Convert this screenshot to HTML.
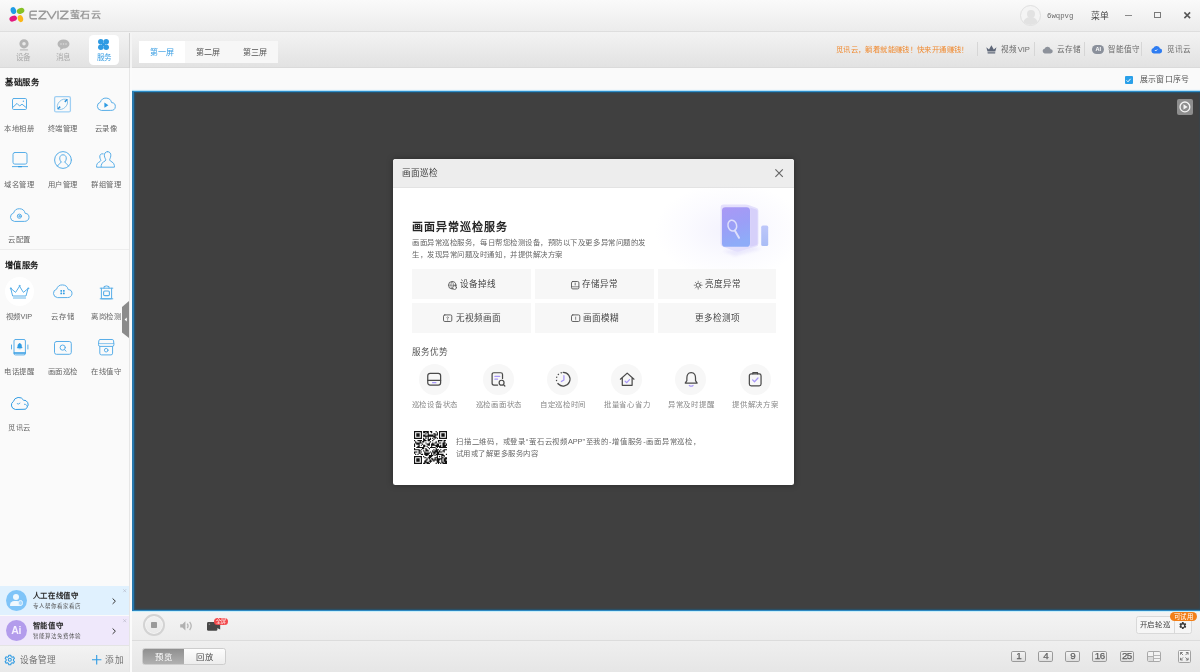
<!DOCTYPE html>
<html lang="zh-CN">
<head>
<meta charset="utf-8">
<title>EZVIZ</title>
<style>
*{box-sizing:border-box;margin:0;padding:0}
html,body{width:1200px;height:672px;overflow:hidden;background:#f5f5f5}
body{font-family:"Liberation Sans",sans-serif;font-size:7.5px;color:#666;position:relative;-webkit-text-size-adjust:none}
.abs{position:absolute}
.t{position:absolute;white-space:nowrap;height:12px;line-height:12px}
.c{text-align:center}
.j{text-align:justify;text-align-last:justify;text-justify:inter-character}
svg{position:absolute;overflow:visible}
/* ---------- title bar ---------- */
#titlebar{left:0;top:0;width:1200px;height:32px;background:linear-gradient(#fafafa,#ececec);border-bottom:1px solid #dedede}
/* ---------- nav row ---------- */
#navrow{left:0;top:32px;width:1200px;height:36px;background:linear-gradient(#f3f3f3,#e2e2e2);border-bottom:1px solid #dadada}
#svc{left:88.5px;top:34.5px;width:30.5px;height:30px;background:#fff;border-radius:4.5px}
#tabs{left:138.7px;top:41.3px;width:139.5px;height:21.3px;background:#f7f7f7}
#tab1{left:0;top:0;width:46.6px;height:21.3px;background:#fff}
.tab{font-size:8.1px;color:#555}
.sep{position:absolute;top:42px;width:1px;height:14px;background:#d6d6d6}
.tb{font-size:7.6px;color:#6a6a6a;top:43.5px}
/* ---------- sidebar ---------- */
#sidebar{left:0;top:68px;width:129px;height:604px;background:#fafafa}
#sidesep{left:128.600px;top:68px;width:3.200px;height:604px;background:#fbfbfb;border-left:1.200px solid #e6e6e6}
#sidesep2{left:129px;top:33px;width:2.800px;height:35px;background:#f4f4f4;border-left:1px solid #d2d2d2}
.lab{font-size:7.5px;color:#666;width:44px;text-align:center}
.sec{font-family:"Liberation Serif",serif;font-weight:bold;font-size:8.300px;color:#1e1e1e;left:5px}
/* ---------- main ---------- */
#subbar{left:132px;top:68px;width:1068px;height:22px;background:#fafafa}
#video{left:131.700px;top:90.900px;width:1068.300px;height:519.900px;background:#404040;border-top:1.700px solid #2d8dc9;border-bottom:1.800px solid #2e88c2;border-left:2.700px solid #2979ae;box-shadow:inset 1px 1px 1.500px #26546f,inset 0 -1px 1.500px #26546f,0 -1.100px 0 #b4e1f7,0 1.500px 0 #c6eefa}
#ctrlbar{left:132px;top:611px;width:1068px;height:30px;background:linear-gradient(#f4f4f4,#ececec);border-bottom:1px solid #dcdcdc}
#botbar{left:132px;top:641px;width:1068px;height:31px;background:linear-gradient(#efefef,#e6e6e6)}
/* ---------- modal ---------- */
#modal{left:393px;top:159px;width:401px;height:326px;background:#fff;border-radius:2.5px;overflow:hidden;box-shadow:0 0 6px rgba(0,0,0,.35)}
#mhead{left:0;top:0;width:401px;height:29px;background:#ededed;border-bottom:1px solid #e3e3e3}
</style>
</head>
<body>
<div id="app" style="position:absolute;left:0;top:0;width:1200px;height:672px;will-change:transform;opacity:.999">
<!-- ================= TITLE BAR ================= -->
<div id="titlebar" class="abs">
  <!-- logo petals -->
  <svg style="left:8px;top:6px" width="18" height="18" viewBox="0 0 18 18">
    <ellipse cx="5.4" cy="4.6" rx="2.7" ry="3.5" fill="#1e9be6" transform="rotate(-18 5.4 4.6)"/>
    <ellipse cx="12.6" cy="4.9" rx="3.9" ry="2.8" fill="#86c125" transform="rotate(-22 12.6 4.9)"/>
    <ellipse cx="5.2" cy="12.6" rx="3.9" ry="2.7" fill="#e3187e" transform="rotate(-22 5.2 12.6)"/>
    <ellipse cx="12.4" cy="12.6" rx="2.7" ry="3.6" fill="#fbb617" transform="rotate(-16 12.4 12.6)"/>
  </svg>
  <!-- EZVIZ wordmark -->
  <svg style="left:29px;top:10px" width="42" height="10" viewBox="0 0 42 10" fill="none" stroke="#9a9a9a" stroke-width="1.45" stroke-linejoin="round">
    <path d="M8 1.3H2.6Q1 1.3 1 2.9V7.1Q1 8.7 2.6 8.7H8M1.4 5H7.4"/>
    <path d="M9.6 1.3H17L9.8 8.7H17.4"/>
    <path d="M18 1.1L22.6 8.7L27.2 1.1"/>
    <path d="M29 .8V9.2"/>
    <path d="M31 1.3H39L31.4 8.7H39.6"/>
  </svg>
  <div class="t" style="left:70.200px;top:9.300px;font-size:8.600px;font-weight:bold;color:#9a9a9a;transform:scaleX(1.160);transform-origin:0 50%">萤石云</div>
  <!-- avatar -->
  <div class="abs" style="left:1019.5px;top:5.3px;width:21px;height:21px;border-radius:50%;background:#f4f4f4;border:1px solid #e0e0e0;overflow:hidden">
    <div class="abs" style="left:6px;top:3.5px;width:8px;height:8.5px;border-radius:50%;background:#e2e2e2"></div>
    <div class="abs" style="left:2.5px;top:11px;width:15px;height:12px;border-radius:7px 7px 0 0;background:#e2e2e2"></div>
  </div>
  <div class="t" style="left:1047px;top:9.600px;font-family:'Liberation Mono',monospace;font-size:7.300px;color:#6a6a6a">6wqpvg</div>
  <div class="t" style="left:1091px;top:9.5px;font-size:8.8px;color:#444">菜单</div>
  <div class="abs" style="left:1125px;top:14.5px;width:6.5px;height:1.3px;background:#8a8a8a"></div>
  <div class="abs" style="left:1154px;top:12px;width:6.8px;height:6px;border:1px solid #7a7a7a;border-top-width:1.8px"></div>
  <svg style="left:1184px;top:12px" width="6.5" height="6.5" viewBox="0 0 6.5 6.5" stroke="#555" stroke-width="1.5"><path d="M.4 .4L6.1 6.1M6.1 .4L.4 6.1"/></svg>
</div>

<!-- ================= NAV ROW ================= -->
<div id="navrow" class="abs"></div>
<div id="svc" class="abs"></div>
<!-- 设备 icon -->
<svg style="left:17.5px;top:38.5px" width="12" height="12" viewBox="0 0 12 12">
  <circle cx="6" cy="4.800" r="3.200" fill="#e9e9e9" stroke="#b4b4b4" stroke-width="2.800"/>
  <rect x="1.800" y="10.300" width="8.400" height="1.200" rx=".6" fill="#bcbcbc"/>
</svg>
<div class="t c" style="left:8px;top:52.100px;width:30px;color:#a9a9a9">设备</div>
<!-- 消息 icon -->
<svg style="left:57px;top:38.5px" width="13" height="12" viewBox="0 0 13 12">
  <ellipse cx="6.5" cy="5" rx="6" ry="4.6" fill="#b7b7b7"/>
  <path d="M3.4 8.4L3 11.2L6.4 9.2Z" fill="#b7b7b7"/>
  <circle cx="4" cy="5" r=".8" fill="#ddd"/><circle cx="6.5" cy="5" r=".8" fill="#ddd"/><circle cx="9" cy="5" r=".8" fill="#ddd"/>
</svg>
<div class="t c" style="left:48.3px;top:52.100px;width:30px;color:#a9a9a9">消息</div>
<!-- 服务 icon -->
<svg style="left:98px;top:39px" width="11" height="11" viewBox="0 0 11 11" fill="#2f9be3">
  <circle cx="2.8" cy="2.8" r="2.75"/><circle cx="8.2" cy="2.8" r="2.75"/><circle cx="2.8" cy="8.2" r="2.75"/><circle cx="8.2" cy="8.2" r="2.75"/>
  <rect x="4" y="4" width="3" height="3"/>
</svg>
<div class="t c" style="left:88.5px;top:52.100px;width:30.5px;color:#3a9ee3">服务</div>

<!-- tabs -->
<div id="tabs" class="abs">
  <div id="tab1" class="abs"></div>
  <div class="t c tab" style="left:0;top:5.300px;width:46.600px;color:#3a9ee3">第一屏</div>
  <div class="t c tab" style="left:46.5px;top:5.300px;width:46.600px">第二屏</div>
  <div class="t c tab" style="left:93px;top:5.300px;width:46.600px">第三屏</div>
</div>

<!-- toolbar right -->
<div class="t j" style="left:835.8px;top:43.8px;width:132.6px;font-size:7.3px;color:#f08a30">觅讯云，躺着就能赚钱！快来开通赚钱！</div>
<div class="sep" style="left:977px"></div>
<svg style="left:986.3px;top:45.4px" width="10.8" height="8.6" viewBox="0 0 10.8 8.6" fill="#5d6677">
  <path d="M.3 2.3L3 4.6L5.4 .3L7.8 4.6L10.5 2.3L9.3 6.6H1.5Z"/><rect x="1.5" y="7.2" width="7.8" height="1.2" rx=".4"/>
</svg>
<div class="t tb j" style="left:1000.7px;width:29.200px">视频VIP</div>
<div class="sep" style="left:1033.5px"></div>
<svg style="left:1042.2px;top:46px" width="10.8" height="7.4" viewBox="0 0 10.8 7.4" fill="#8d929b">
  <path d="M2.6 7.4A2.4 2.4 0 0 1 2.5 2.7A3.3 3.3 0 0 1 8.7 3.2A2.1 2.1 0 0 1 8.6 7.4Z"/>
</svg>
<div class="t tb" style="left:1056.6px">云存储</div>
<div class="sep" style="left:1084.3px"></div>
<div class="abs" style="left:1092.2px;top:45px;width:12px;height:9.2px;border-radius:4.6px;background:#8a909b;color:#fff;font-size:5.6px;font-weight:bold;line-height:9.2px;text-align:center">AI</div>
<div class="t tb" style="left:1107.8px">智能值守</div>
<div class="sep" style="left:1141.2px"></div>
<svg style="left:1150.8px;top:44.6px" width="10.8" height="8.4" viewBox="0 0 10.8 8.4">
  <path d="M2.8 8.4A2.7 2.7 0 0 1 2.4 3.1A3.5 3.5 0 0 1 9 3.6A2.3 2.3 0 0 1 8.4 8.4Z" fill="#2f7df2"/>
  <path d="M3.8 5.4Q5 6.3 6.4 4.6" stroke="#fff" stroke-width=".8" fill="none"/>
</svg>
<div class="t tb" style="left:1166.5px">觅讯云</div>

<!-- ================= SIDEBAR ================= -->
<div id="sidebar" class="abs"></div>
<div id="sidesep" class="abs"></div>
<div id="sidesep2" class="abs"></div>
<div class="t sec j" style="top:77.100px;width:33.500px">基础服务</div>

<!-- row 1 -->
<svg style="left:12px;top:98.4px" width="15" height="12" viewBox="0 0 15 12" fill="none" stroke="#58aee8" stroke-width="1" stroke-linecap="round" stroke-linejoin="round">
  <rect x=".5" y=".5" width="14" height="11" rx="1.2"/><path d="M1 9.2L5 5.4L7.6 8L10 6.2L14 9.4"/><circle cx="11.4" cy="3.2" r=".7" fill="#58aee8" stroke="none"/>
</svg>
<div class="t j" style="left:4.3px;top:123.2px;width:29.6px;font-size:7.300px;color:#666">本地相册</div>
<svg style="left:54px;top:96.3px" width="17" height="16.5" viewBox="0 0 17 16.5" fill="none" stroke="#58aee8" stroke-width="1" stroke-linecap="round" stroke-linejoin="round">
  <rect x=".6" y=".6" width="15.800" height="15.300" rx="1.500" stroke="#9fcff3" stroke-width="1.300"/>
  <ellipse cx="8.5" cy="8.250" rx="6.200" ry="4" transform="rotate(-45 8.500 8.250)" stroke="#86bfe6" stroke-width=".9"/><path d="M10.800 5.900L13.400 3.300M6.200 10.600L3.600 13.200" stroke="#2f93dc" stroke-width="1.500" stroke-linecap="butt"/>
</svg>
<div class="t j" style="left:47.7px;top:123.2px;width:29.6px;font-size:7.300px;color:#666">终端管理</div>
<svg style="left:96px;top:97.4px" width="20" height="14" viewBox="0 0 20 14" fill="none" stroke="#58aee8" stroke-width="1" stroke-linecap="round" stroke-linejoin="round">
  <path d="M5 13.4A4.2 4.2 0 0 1 4.4 5.2A5.8 5.8 0 0 1 15.6 5.6A3.9 3.9 0 0 1 15.2 13.4Z"/><path d="M8.4 5.6L12.4 8.2L8.4 10.8Z" fill="#2f9be3" stroke="none"/>
</svg>
<div class="t j" style="left:94.8px;top:123.2px;width:22.2px;font-size:7.300px;color:#666">云录像</div>

<!-- row 2 -->
<svg style="left:11.5px;top:152px" width="16" height="16.5" viewBox="0 0 16 16.5" fill="none" stroke="#58aee8" stroke-width="1" stroke-linecap="round" stroke-linejoin="round">
  <rect x="1" y=".5" width="14" height="11.6" rx="1.8"/><path d="M.4 14.6H15.6"/><rect x="6" y="14" width="4" height="1.3" rx=".6" fill="#2f9be3" stroke="none"/>
</svg>
<div class="t j" style="left:4.3px;top:179.0px;width:29.6px;font-size:7.300px;color:#666">域名管理</div>
<svg style="left:53.8px;top:151.2px" width="18" height="18" viewBox="0 0 18 18" fill="none" stroke="#58aee8" stroke-width="1" stroke-linecap="round" stroke-linejoin="round">
  <circle cx="9" cy="9" r="8.400"/><path d="M7.200 11C5 9.400 4.800 3.800 9 3.800C13.200 3.800 13 9.400 10.800 11M7.200 11C7.200 12.400 4.600 12.600 3.400 15M10.800 11C10.800 12.400 13.400 12.600 14.600 15"/>
</svg>
<div class="t j" style="left:47.7px;top:179.0px;width:29.6px;font-size:7.300px;color:#666">用户管理</div>
<svg style="left:95.900px;top:151.200px" width="19" height="17" viewBox="0 0 19 17" fill="none" stroke="#58aee8" stroke-width="1" stroke-linecap="round" stroke-linejoin="round">
  <path d="M11.6 .6C14 .6 15 2.6 14.8 4.8C14.6 7 13.6 8 13.6 9C13.6 10.4 18.4 11 18.4 14.6V16.2H5.2V14.6C5.2 11 9.8 10.4 9.8 9C9.8 8 8.6 7 8.4 4.8C8.2 2.6 9.2 .6 11.6 .6Z"/>
  <path d="M7.2 2.8C4.6 2.2 3.6 4.2 3.8 6C4 8 4.8 8.6 4.8 9.6C4.8 10.8 .6 11.4 .6 14.4V16.2H5"/>
</svg>
<div class="t j" style="left:91.1px;top:179.0px;width:29.6px;font-size:7.300px;color:#666">群组管理</div>

<!-- row 3 -->
<svg style="left:9px;top:208px" width="21" height="14" viewBox="0 0 21 14" fill="none" stroke="#58aee8" stroke-width="1" stroke-linecap="round" stroke-linejoin="round">
  <path d="M5.2 13.4A4.3 4.3 0 0 1 4.6 5A6 6 0 0 1 16.2 5.4A4 4 0 0 1 15.8 13.4Z"/><circle cx="10.4" cy="8.2" r="2.1"/><circle cx="10.4" cy="8.2" r=".7"/>
</svg>
<div class="t j" style="left:8.0px;top:233.600px;width:22.200px;font-size:7.300px;color:#666">云配置</div>

<div class="abs" style="left:0;top:249px;width:129px;height:1px;background:#ededed"></div>
<div class="t sec j" style="top:259.800px;width:33.200px">增值服务</div>

<!-- row 4 -->
<div class="abs" style="left:5px;top:277.3px;width:29px;height:29px;border-radius:50%;background:#fff"></div>
<svg style="left:10px;top:285.200px" width="19" height="14.200" viewBox="0 0 19 14.2" fill="none" stroke="#58aee8" stroke-width="1" stroke-linecap="round" stroke-linejoin="round">
  <path d="M1 3.6L5.6 7.4L9.5 1.2L13.4 7.4L18 3.6L16 11H3Z"/><circle cx="9.5" cy=".9" r=".5"/><circle cx=".8" cy="3.3" r=".5"/><circle cx="18.2" cy="3.3" r=".5"/>
  <rect x="3" y="12.2" width="13" height="1.6" rx=".3" fill="#9ccff1" stroke="none"/>
</svg>
<div class="t j" style="left:6.4px;top:311.0px;width:25.5px;font-size:7.300px;color:#666">视频VIP</div>
<svg style="left:52px;top:284.3px" width="21" height="14.2" viewBox="0 0 21 14.2" fill="none" stroke="#58aee8" stroke-width="1" stroke-linecap="round" stroke-linejoin="round">
  <path d="M5.2 13.6A4.3 4.3 0 0 1 4.6 5.2A6 6 0 0 1 16.2 5.6A4 4 0 0 1 15.8 13.6Z"/>
  <g fill="#2f9be3" stroke="none"><rect x="8.4" y="6" width="1.7" height="1.7" rx=".4"/><rect x="11" y="6" width="1.7" height="1.7" rx=".4"/><rect x="8.4" y="8.6" width="1.7" height="1.7" rx=".4"/><rect x="11" y="8.6" width="1.7" height="1.7" rx=".4"/></g>
</svg>
<div class="t j" style="left:51.4px;top:311.0px;width:22.2px;font-size:7.300px;color:#666">云存储</div>
<svg style="left:98.8px;top:284.8px" width="15" height="15" viewBox="0 0 15 15" fill="none" stroke="#58aee8" stroke-width="1" stroke-linecap="round" stroke-linejoin="round">
  <path d="M1.2 3.2H13.8M2.4 3.2V13.8H12.6V3.2M5 3.2V1.6Q7.5 .2 10 1.6V3.2M1.2 13.8H13.8"/><rect x="4.6" y="6" width="5.8" height="4.6" rx="1.2" stroke-width="1.1"/>
</svg>
<div class="t j" style="left:91.1px;top:311.0px;width:29.6px;font-size:7.300px;color:#666">离岗检测</div>

<!-- collapse handle -->
<svg style="left:122.4px;top:300.8px" width="7" height="37" viewBox="0 0 7 37"><path d="M7 0L0 6V31.6L7 37Z" fill="#8b8b8b"/><path d="M4.8 16.6L2.6 18.5L4.8 20.4Z" fill="#fff"/></svg>

<!-- row 5 -->
<svg style="left:10.6px;top:339.4px" width="17.4" height="16.4" viewBox="0 0 17.4 16.4" fill="none" stroke="#58aee8" stroke-width="1" stroke-linecap="round" stroke-linejoin="round">
  <rect x="3" y=".5" width="11.4" height="15.4" rx="1.4"/><path d="M3.2 14H14.2" stroke="#2f9be3" stroke-width="1.3"/><path d="M.5 6V10M16.9 6V10"/>
  <path d="M8.7 4.6C7 4.6 6.8 6.4 6.8 7.6L6.2 9H11.2L10.6 7.6C10.6 6.4 10.4 4.6 8.7 4.6ZM8 9.8H9.4" fill="#2f9be3" stroke="#2f9be3" stroke-width=".5"/>
</svg>
<div class="t j" style="left:4.3px;top:366.2px;width:29.6px;font-size:7.300px;color:#666">电话提醒</div>
<svg style="left:54.2px;top:340.6px" width="17.8" height="13.8" viewBox="0 0 17.8 13.8" fill="none" stroke="#58aee8" stroke-width="1" stroke-linecap="round" stroke-linejoin="round">
  <rect x=".5" y=".5" width="16.8" height="12.8" rx="2"/><circle cx="8.7" cy="6.6" r="2.6"/><path d="M10.6 8.6L12 10.2"/>
</svg>
<div class="t j" style="left:47.7px;top:366.2px;width:29.6px;font-size:7.300px;color:#666">画面巡检</div>
<svg style="left:97.5px;top:339.4px" width="16.4" height="16.4" viewBox="0 0 16.4 16.4" fill="none" stroke="#58aee8" stroke-width="1" stroke-linecap="round" stroke-linejoin="round">
  <path d="M2.2 .5H14.2Q15.4 .5 15.6 1.8L15.9 5.6Q15.9 7.4 14.4 7.4H2Q.5 7.4 .5 5.6L.8 1.8Q1 .5 2.2 .5Z"/><path d="M1.8 7.4V14.2Q1.8 15.9 3.4 15.9H13Q14.6 15.9 14.6 14.2V7.4"/><circle cx="8.2" cy="11.2" r="1.8"/><path d="M.6 4.6H15.8" stroke-width=".7"/>
</svg>
<div class="t j" style="left:91.1px;top:366.2px;width:29.6px;font-size:7.300px;color:#666">在线值守</div>

<!-- row 6 -->
<svg style="left:10.2px;top:395.8px" width="18.6" height="14" viewBox="0 0 18.6 14" fill="none" stroke="#58aee8" stroke-width="1" stroke-linecap="round" stroke-linejoin="round">
  <path d="M5 13.4A4.4 4.4 0 0 1 3.4 5.4A5.6 5.6 0 0 1 13.6 4.2A4.3 4.3 0 0 1 17.2 11.2A3.2 3.2 0 0 1 13.4 13.4Z" stroke="#2f9be3"/><path d="M14.4 8.2A2.6 2.6 0 0 1 17.4 10.8"/><path d="M7.2 7.8Q8.4 8.8 10 7.2" stroke="#2f9be3" stroke-width=".8"/>
</svg>
<div class="t j" style="left:8.0px;top:422.0px;width:22.2px;font-size:7.300px;color:#666">觅讯云</div>

<!-- promo cards -->
<div class="abs" style="left:0;top:586px;width:129px;height:29.2px;background:#e0f1fe"></div>
<div class="abs" style="left:0;top:615.6px;width:129px;height:29.6px;background:#efe8fb"></div>
<div class="abs" style="left:5.7px;top:590px;width:21px;height:21px;border-radius:50%;background:#7fc4f8;overflow:hidden">
  <div class="abs" style="left:7.2px;top:4.4px;width:6px;height:6px;border-radius:50%;background:#f0f8fe"></div>
  <div class="abs" style="left:4.6px;top:10.8px;width:10.4px;height:5.4px;border-radius:5px 5px 1px 1px;background:#f0f8fe"></div>
  <div class="abs" style="left:12px;top:10.4px;width:5.2px;height:5.2px;border-radius:50%;background:#a8d8fb;border:.7px solid #e6f4fe"></div>
</div>
<div class="abs" style="left:5.7px;top:620.2px;width:21px;height:21px;border-radius:50%;background:#b39cec;color:#f6f0ff;font-weight:bold;font-size:10.5px;line-height:21px;text-align:center;letter-spacing:-.3px">Ai</div>
<div class="t j" style="left:32.600px;top:590.200px;width:45.4px;font-size:7.4px;font-weight:bold;color:#2a2a2a">人工在线值守</div>
<div class="t j" style="left:32.800px;top:600.200px;width:43.500px;font-size:5.5px;color:#555">专人帮你看家看店</div>
<div class="t j" style="left:32.600px;top:620.300px;width:30.4px;font-size:7.4px;font-weight:bold;color:#2a2a2a">智能值守</div>
<div class="t j" style="left:32.800px;top:630.400px;width:43.500px;font-size:5.5px;color:#555">智能算法免费体验</div>
<svg style="left:112px;top:597.6px" width="4" height="6.4" viewBox="0 0 4 6.4" fill="none" stroke="#333" stroke-width="1"><path d="M.6 .5L3.4 3.2L.6 5.9"/></svg>
<svg style="left:112px;top:627.6px" width="4" height="6.4" viewBox="0 0 4 6.4" fill="none" stroke="#333" stroke-width="1"><path d="M.6 .5L3.4 3.2L.6 5.9"/></svg>
<svg style="left:122.6px;top:588.6px" width="3.4" height="3.4" viewBox="0 0 3.4 3.4" stroke="#aab" stroke-width=".5"><path d="M.2 .2L3.2 3.2M3.2 .2L.2 3.2"/></svg>
<svg style="left:122.6px;top:618.8px" width="3.4" height="3.4" viewBox="0 0 3.4 3.4" stroke="#aab" stroke-width=".5"><path d="M.2 .2L3.2 3.2M3.2 .2L.2 3.2"/></svg>

<!-- sidebar bottom bar -->
<div class="abs" style="left:0;top:645.2px;width:129px;height:26.8px;background:linear-gradient(#f3f3f3,#e9e9e9);border-top:1px solid #e4e4e4"></div>
<svg style="left:4.2px;top:653.6px" width="11.6" height="11.6" viewBox="0 0 24 24" fill="none" stroke="#2f9be3" stroke-width="2.2" stroke-linejoin="round">
  <path d="M10 2.4h4l.7 3 2.1 1.2 2.9-.9 2 3.4-2.2 2.1v2.4l2.2 2.1-2 3.4-2.9-.9-2.1 1.2-.7 3h-4l-.7-3-2.1-1.2-2.9.9-2-3.4 2.2-2.1v-2.4L2.300 9.100l2-3.400 2.900.9 2.100-1.200z"/><circle cx="12" cy="12" r="3.2"/>
</svg>
<div class="t j" style="left:20.400px;top:654.300px;width:35.8px;font-size:8.7px;color:#707070">设备管理</div>
<svg style="left:92.2px;top:655px" width="9.4" height="9.4" viewBox="0 0 9.4 9.4" stroke="#2f9be3" stroke-width="1.1"><path d="M4.7 0V9.400M0 4.700H9.400"/></svg>
<div class="t j" style="left:104.800px;top:654.300px;width:18.8px;font-size:8.7px;color:#707070">添加</div>

<!-- ================= MAIN AREA ================= -->
<div id="subbar" class="abs"></div>
<div class="abs" style="left:1125.2px;top:76.2px;width:7.5px;height:7.4px;border-radius:1px;background:#2aa0e9"></div>
<svg style="left:1126.4px;top:77.6px" width="5.2" height="4.6" viewBox="0 0 5.2 4.6" fill="none" stroke="#fff" stroke-width="1"><path d="M.6 2.4L2 3.8L4.6 .8"/></svg>
<div class="t j" style="left:1140.400px;top:74px;width:48.2px;font-size:7.9px;color:#555">展示窗口序号</div>
<div id="video" class="abs"></div>
<!-- play button top-right -->
<div class="abs" style="left:1177.4px;top:98.8px;width:15.8px;height:15.8px;border-radius:2px;background:#8e8e8e"></div>
<svg style="left:1179.4px;top:100.8px" width="11.8" height="11.8" viewBox="0 0 11.8 11.8"><circle cx="5.9" cy="5.9" r="4.9" fill="none" stroke="#f4f4f4" stroke-width="1.3"/><path d="M4.5 3.3L8.7 5.9L4.5 8.5Z" fill="#f4f4f4"/></svg>

<div id="ctrlbar" class="abs"></div>
<div class="abs" style="left:131.700px;top:610.800px;width:1068.300px;height:1.500px;background:#c8effa"></div>
<!-- stop button -->
<div class="abs" style="left:142.600px;top:613.900px;width:22.500px;height:22.500px;border-radius:50%;background:linear-gradient(#f1f1f1,#e9e9e9);border:2px solid #d3d3d3;box-shadow:inset 0 0 0 .7px #f6f6f6"></div>
<div class="abs" style="left:150.900px;top:622.300px;width:6.200px;height:6px;border-radius:.8px;background:#9a9a9a"></div>
<!-- speaker -->
<svg style="left:179.6px;top:620.6px" width="13" height="9.8" viewBox="0 0 13 9.8"><path d="M.2 3.200H2.400L5.400 .3V9.500L2.400 6.600H.2Z" fill="#b0b0b0"/><path d="M7.200 2.600Q9 4.900 7.200 7.200M9.600 .8Q12.800 4.900 9.600 9" fill="none" stroke="#b6b6b6" stroke-width="1.250"/></svg>
<!-- camera + badge -->
<svg style="left:207px;top:621.8px" width="13.4" height="8.8" viewBox="0 0 13.4 8.800"><rect x="0" y="0" width="10.4" height="8.800" rx="1.4" fill="#474747"/><path d="M10 2.600L13.200 1.200V7.400L10 6Z" fill="#474747"/><circle cx="2.400" cy="2.200" r=".8" fill="#888"/></svg>
<div class="abs" style="left:214.2px;top:618px;width:13.8px;height:7.4px;border-radius:3.7px;background:#f2494c;color:#fff;font-size:5.2px;line-height:7.4px;text-align:center">全屏</div>

<!-- 开启轮巡 -->
<div class="abs" style="left:1136.3px;top:616.3px;width:55.4px;height:17.4px;border-radius:2.5px;border:1px solid #d9d9d9;background:#f6f6f6"></div>
<div class="abs" style="left:1174.4px;top:616.8px;width:1px;height:16.4px;background:#d9d9d9"></div>
<div class="t j" style="left:1139.8px;top:619.3px;width:30px;font-size:7.4px;color:#444">开启轮巡</div>
<svg style="left:1179.2px;top:621.5px" width="7.6" height="7.6" viewBox="0 0 24 24"><path fill="#3a3a3a" d="M9.600 0h4.800l.7 3.400 2 1.100 3.300-1.100 2.400 4.200-2.600 2.300v2.200l2.600 2.300-2.400 4.200-3.300-1.100-2 1.100-.7 3.400H9.600l-.7-3.400-2-1.100-3.300 1.100-2.400-4.200 2.600-2.300V9.900L1.200 7.600l2.400-4.200 3.300 1.100 2-1.100z"/><circle cx="12" cy="12" r="4.200" fill="#f6f6f6"/></svg>
<div class="abs" style="left:1170px;top:612px;width:27px;height:9.4px;border-radius:4.7px;background:#f27f17;color:#fff;font-size:6.4px;line-height:9.4px;text-align:center;letter-spacing:.4px">可试用</div>

<div id="botbar" class="abs"></div>
<!-- segmented -->
<div class="abs" style="left:142px;top:647.8px;width:84.4px;height:17.6px;border-radius:2.600px;border:1px solid #cdcdcd;background:linear-gradient(#fdfdfd,#ededed);overflow:hidden">
  <div class="abs" style="left:-1px;top:-1px;width:42px;height:17.6px;background:linear-gradient(#8d8d8d,#b3b3b3)"></div>
</div>
<div class="t j" style="left:155px;top:651.2px;width:16.800px;font-size:8.300px;color:#fff">预览</div>
<div class="t j" style="left:196.200px;top:651.2px;width:16.800px;font-size:8.300px;color:#4a4a4a">回放</div>
<div class="abs" style="left:1011.3px;top:651.3px;width:14.6px;height:10.5px;border-radius:1.8px;border:1px solid #9a9a9a;background:linear-gradient(#f4f4f4,#dedede);color:#606060;font-size:9.800px;line-height:8.700px;text-align:center;letter-spacing:-.6px;-webkit-text-stroke:.25px #606060">1</div>
<div class="abs" style="left:1038.3px;top:651.3px;width:14.6px;height:10.5px;border-radius:1.8px;border:1px solid #9a9a9a;background:linear-gradient(#f4f4f4,#dedede);color:#606060;font-size:9.800px;line-height:8.700px;text-align:center;letter-spacing:-.6px;-webkit-text-stroke:.25px #606060">4</div>
<div class="abs" style="left:1065.3px;top:651.3px;width:14.6px;height:10.5px;border-radius:1.8px;border:1px solid #9a9a9a;background:linear-gradient(#f4f4f4,#dedede);color:#606060;font-size:9.800px;line-height:8.700px;text-align:center;letter-spacing:-.6px;-webkit-text-stroke:.25px #606060">9</div>
<div class="abs" style="left:1092.4px;top:651.3px;width:14.6px;height:10.5px;border-radius:1.8px;border:1px solid #9a9a9a;background:linear-gradient(#f4f4f4,#dedede);color:#606060;font-size:9.800px;line-height:8.700px;text-align:center;letter-spacing:-.6px;-webkit-text-stroke:.25px #606060">16</div>
<div class="abs" style="left:1119.5px;top:651.3px;width:14.6px;height:10.5px;border-radius:1.8px;border:1px solid #9a9a9a;background:linear-gradient(#f4f4f4,#dedede);color:#606060;font-size:9.800px;line-height:8.700px;text-align:center;letter-spacing:-.6px;-webkit-text-stroke:.25px #606060">25</div>
<div class="abs" style="left:1146.600px;top:651.300px;width:14.400px;height:10.500px;border-radius:1.800px;border:1px solid #a8a8a8;background:#f3f3f3;overflow:hidden">
  <div class="abs" style="left:0;top:4.400px;width:6px;height:4.200px;background:#dcdcdc"></div>
  <div class="abs" style="left:5.800px;top:0;width:1px;height:9px;background:#b0b0b0"></div>
  <div class="abs" style="left:0;top:3.900px;width:6px;height:1px;background:#b0b0b0"></div>
  <div class="abs" style="left:6.500px;top:2.300px;width:6px;height:.9px;background:#b8b8b8"></div>
  <div class="abs" style="left:6.500px;top:5.400px;width:6px;height:.9px;background:#b8b8b8"></div>
</div>
<div class="abs" style="left:1178.200px;top:650.100px;width:12.800px;height:12.700px;border-radius:1.500px;border:1.100px solid #a2a2a2;background:linear-gradient(#f8f8f8,#ececec)"></div>
<svg style="left:1180.300px;top:652.200px" width="8.600" height="8.500" viewBox="0 0 8.600 8.500" fill="none" stroke="#6a6a6a" stroke-width=".85"><path d="M.5 2.700V.5H2.700M.7 .7L3.100 3.100M5.900 .5H8.100V2.700M7.900 .7L5.500 3.100M.5 5.800V8H2.700M.7 7.800L3.100 5.400M8.100 5.800V8H5.900M7.900 7.800L5.500 5.400"/></svg>

<!-- ================= MODAL ================= -->
<div id="modal" class="abs">
  <div id="mhead" class="abs"></div>
  <div class="t j" style="left:9.3px;top:8px;width:35px;font-size:8.6px;color:#3c3c3c">画面巡检</div>
  <svg style="left:381.8px;top:10.2px" width="8.2" height="8.2" viewBox="0 0 8.200 8.200" stroke="#666" stroke-width="1.15"><path d="M.4 .4L7.800 7.800M7.800 .4L.4 7.800"/></svg>

  <!-- hero glow + cube -->
  <div class="abs" style="left:262px;top:24px;width:150px;height:96px;border-radius:50%;background:radial-gradient(closest-side,rgba(208,204,250,.26),rgba(222,220,252,.12) 60%,rgba(255,255,255,0))"></div>
  <svg style="left:320px;top:40px" width="62" height="60" viewBox="0 0 62 60">
    <defs>
      <linearGradient id="hg1" x1="0" y1="0" x2=".25" y2="1"><stop offset="0" stop-color="#aa98f5"/><stop offset=".55" stop-color="#9a9ff7"/><stop offset="1" stop-color="#8eacf8"/></linearGradient>
      <linearGradient id="hg2" x1="0" y1="0" x2="0" y2="1"><stop offset="0" stop-color="#b9c3fa"/><stop offset="1" stop-color="#a3b8f6"/></linearGradient>
      <filter id="hb" x="-20%" y="-20%" width="140%" height="140%"><feGaussianBlur stdDeviation=".55"/></filter>
      <filter id="hb2" x="-20%" y="-20%" width="140%" height="140%"><feGaussianBlur stdDeviation="1.6"/></filter>
    </defs>
    <!-- floor shadow -->
    <path d="M10 52L40 48L48 50L22 57Z" fill="#dfdcfb" opacity=".55" filter="url(#hb2)"/>
    <!-- small block -->
    <rect x="48.200" y="26.600" width="7" height="20.400" rx="1.600" fill="url(#hg2)" filter="url(#hb)" opacity=".92"/>
    <!-- glass body -->
    <path d="M10 5.500Q7.600 5.500 7.600 8V44.500Q7.600 46.600 9.600 47.400L22 52.300Q24 53 26 52.400L43 47.600Q45.400 46.900 45.400 44.400V11.600Q45.400 9.300 43.200 8.800L37 6.400Q34.500 5.500 32 5.500Z" fill="#e2defc" opacity=".9" filter="url(#hb)"/>
    <path d="M37.200 8.400L43.400 10.600Q44.600 11 44.600 12.400V44.200Q44.600 45.800 43 46.200L37.200 47.800Z" fill="#d6d0fa" opacity=".95" filter="url(#hb)"/>
    <!-- front face -->
    <rect x="9" y="8.200" width="28" height="39.600" rx="3.400" fill="url(#hg1)" filter="url(#hb)"/>
    <!-- magnifier -->
    <g fill="none" stroke="#e2e3fc" stroke-linecap="round" filter="url(#hb)" opacity=".95">
      <ellipse cx="19.300" cy="26.600" rx="4.300" ry="5.500" transform="rotate(-14 19.300 26.600)" stroke-width="1.500"/>
      <path d="M21.800 31.600L26 38.800" stroke-width="2"/>
    </g>
  </svg>

  <div class="t j" style="left:19.300px;top:62px;width:94.800px;font-family:'Liberation Serif',serif;font-weight:bold;font-size:11px;color:#262626">画面异常巡检服务</div>
  <div class="t j" style="left:19.200px;top:78px;width:233px;font-size:7.400px;color:#666">画面异常巡检服务，每日帮您检测设备，预防以下及更多异常问题的发</div>
  <div class="t j" style="left:19.200px;top:89.900px;width:150px;font-size:7.400px;color:#666">生，发现异常问题及时通知，并提供解决方案</div>
  <div class="abs" style="left:19.0px;top:110.2px;width:118.800px;height:30px;background:#f7f7f7"></div>
  <svg style="left:55.1px;top:121.6px" width="8.4" height="8.400" viewBox="0 0 8.4 8.400" fill="none" stroke="#555" stroke-width=".9" stroke-linecap="round"><circle cx="4.200" cy="4.200" r="3.700"/><path d="M.5 4.200H7.900M4.200 .5C2.400 2.400 2.400 6 4.200 7.900M4.200 .5C6 2.400 6 6 4.200 7.900" stroke-width=".6"/><circle cx="6.600" cy="6.600" r="1.900" fill="#f7f7f7" stroke-width=".8"/></svg>
  <div class="t j" style="left:66.5px;top:119.2px;width:35.2px;font-size:8.600px;color:#444">设备掉线</div>
  <div class="abs" style="left:141.8px;top:110.2px;width:118.800px;height:30px;background:#f7f7f7"></div>
  <svg style="left:177.9px;top:121.6px" width="8.4" height="8.400" viewBox="0 0 8.4 8.400" fill="none" stroke="#555" stroke-width=".9" stroke-linecap="round"><rect x=".5" y=".5" width="7.400" height="7.400" rx="1.300"/><path d="M.6 5.800H7.800" stroke-width=".7"/><path d="M4.200 2V4" stroke-width=".8"/></svg>
  <div class="t j" style="left:189.3px;top:119.2px;width:35.2px;font-size:8.600px;color:#444">存储异常</div>
  <div class="abs" style="left:264.7px;top:110.2px;width:118.800px;height:30px;background:#f7f7f7"></div>
  <svg style="left:300.8px;top:121.6px" width="8.4" height="8.400" viewBox="0 0 8.4 8.400" fill="none" stroke="#555" stroke-width=".9" stroke-linecap="round"><circle cx="4.200" cy="4.200" r="2"/><path d="M4.200 .2V1.200M4.200 7.200V8.200M.2 4.200H1.200M7.200 4.200H8.200M1.400 1.400L2.100 2.100M6.300 6.300L7 7M7 1.400L6.300 2.100M2.100 6.300L1.400 7" stroke-width=".7"/></svg>
  <div class="t j" style="left:312.2px;top:119.2px;width:35.2px;font-size:8.600px;color:#444">亮度异常</div>
  <div class="abs" style="left:19.0px;top:143.6px;width:118.800px;height:30px;background:#f7f7f7"></div>
  <svg style="left:50.3px;top:155.0px" width="9.3" height="8.400" viewBox="0 0 9.3 8.400" fill="none" stroke="#555" stroke-width=".9" stroke-linecap="round"><rect x=".5" y=".9" width="8.300" height="6.600" rx="1.300"/><path d="M3.800 3.300Q4.700 2.500 5.400 3.300Q5.600 4.100 4.600 4.500V5M4.600 6V6.100" stroke-width=".7"/></svg>
  <div class="t j" style="left:62.6px;top:152.6px;width:44.0px;font-size:8.600px;color:#444">无视频画面</div>
  <div class="abs" style="left:141.8px;top:143.6px;width:118.800px;height:30px;background:#f7f7f7"></div>
  <svg style="left:177.5px;top:155.0px" width="9.3" height="8.400" viewBox="0 0 9.3 8.400" fill="none" stroke="#555" stroke-width=".9" stroke-linecap="round"><rect x=".5" y=".9" width="8.300" height="6.600" rx="1.300"/><path d="M4.650 3V4.800M4.650 5.700V5.800" stroke-width=".7"/></svg>
  <div class="t j" style="left:189.8px;top:152.6px;width:35.2px;font-size:8.600px;color:#444">画面模糊</div>
  <div class="abs" style="left:264.7px;top:143.6px;width:118.800px;height:30px;background:#f7f7f7"></div>
  <div class="t j" style="left:302.1px;top:152.6px;width:44.0px;font-size:8.600px;color:#444">更多检测项</div>
  <div class="t j" style="left:18.700px;top:186.700px;width:35px;font-size:8.600px;color:#555">服务优势</div>
  <div class="abs" style="left:26.0px;top:205.200px;width:31px;height:31px;border-radius:50%;background:#f7f7f7"></div>
  <svg style="left:33.3px;top:212.400px" width="16.400" height="16.400" viewBox="0 0 14 14" fill="none" stroke="#4a4a4a" stroke-width="1.050" stroke-linecap="round" stroke-linejoin="round"><rect x="1.500" y="2" width="11" height="10" rx="2"/><path d="M1.500 8H12.500"/><path d="M5.600 10H8.400" stroke="#a897f8"/></svg>
  <div class="t j" style="left:18.8px;top:239.800px;width:45.500px;font-size:7.400px;color:#888">巡检设备状态</div>
  <div class="abs" style="left:90.1px;top:205.200px;width:31px;height:31px;border-radius:50%;background:#f7f7f7"></div>
  <svg style="left:97.4px;top:212.400px" width="16.400" height="16.400" viewBox="0 0 14 14" fill="none" stroke="#4a4a4a" stroke-width="1.050" stroke-linecap="round" stroke-linejoin="round"><path d="M6.500 12H3.300Q1.800 12 1.800 10.500V3Q1.800 1.500 3.300 1.500H9.200Q10.700 1.500 10.700 3V6.500"/><path d="M4.200 4.600H8.300M4.200 7H6.400" stroke="#a897f8"/><circle cx="9.900" cy="10" r="2.100"/><path d="M11.500 11.600L12.700 12.800"/></svg>
  <div class="t j" style="left:82.8px;top:239.800px;width:45.500px;font-size:7.400px;color:#888">巡检画面状态</div>
  <div class="abs" style="left:154.2px;top:205.200px;width:31px;height:31px;border-radius:50%;background:#f7f7f7"></div>
  <svg style="left:161.5px;top:212.400px" width="16.400" height="16.400" viewBox="0 0 14 14" fill="none" stroke="#4a4a4a" stroke-width="1.050" stroke-linecap="round" stroke-linejoin="round"><path d="M7 1.200A5.800 5.800 0 1 1 2.900 11.100"/><path d="M2.900 11.100A5.800 5.800 0 0 1 7 1.200" stroke-dasharray="1.100 1.700" stroke-linecap="butt"/><path d="M7.600 4V7.600L5.400 9" stroke="#a897f8"/></svg>
  <div class="t j" style="left:146.9px;top:239.800px;width:45.500px;font-size:7.400px;color:#888">自定巡检时间</div>
  <div class="abs" style="left:218.3px;top:205.200px;width:31px;height:31px;border-radius:50%;background:#f7f7f7"></div>
  <svg style="left:225.6px;top:212.400px" width="16.400" height="16.400" viewBox="0 0 14 14" fill="none" stroke="#4a4a4a" stroke-width="1.050" stroke-linecap="round" stroke-linejoin="round"><path d="M1.200 7L7 1.800L12.800 7M2.800 6V12.200H11.200V6"/><path d="M5.200 8.600L6.600 10L9 7.400" stroke="#a897f8"/></svg>
  <div class="t j" style="left:211.0px;top:239.800px;width:45.500px;font-size:7.400px;color:#888">批量省心省力</div>
  <div class="abs" style="left:282.4px;top:205.200px;width:31px;height:31px;border-radius:50%;background:#f7f7f7"></div>
  <svg style="left:289.7px;top:212.400px" width="16.400" height="16.400" viewBox="0 0 14 14" fill="none" stroke="#4a4a4a" stroke-width="1.050" stroke-linecap="round" stroke-linejoin="round"><path d="M7 1.300C4.200 1.300 3.300 3.600 3.300 6V8.200L1.900 10.300H12.100L10.700 8.200V6C10.700 3.600 9.800 1.300 7 1.300Z"/><path d="M5.400 12.400Q7 13.600 8.600 12.400" stroke="#a897f8"/></svg>
  <div class="t j" style="left:275.1px;top:239.800px;width:45.500px;font-size:7.400px;color:#888">异常及时提醒</div>
  <div class="abs" style="left:346.5px;top:205.200px;width:31px;height:31px;border-radius:50%;background:#f7f7f7"></div>
  <svg style="left:353.8px;top:212.400px" width="16.400" height="16.400" viewBox="0 0 14 14" fill="none" stroke="#4a4a4a" stroke-width="1.050" stroke-linecap="round" stroke-linejoin="round"><rect x="2" y="2.400" width="10" height="10.400" rx="1.600"/><path d="M5 2.400V1.400H9V2.400" /><path d="M4.800 7.600L6.400 9.200L9.400 6" stroke="#a897f8"/></svg>
  <div class="t j" style="left:339.2px;top:239.800px;width:45.500px;font-size:7.400px;color:#888">提供解决方案</div>
  <div class="t j" style="left:63px;top:277.200px;width:244px;font-size:7.300px;color:#666">扫描二维码，或登录“萤石云视频APP”至我的-增值服务-画面异常巡检，</div>
  <div class="t j" style="left:63px;top:288.900px;width:81.500px;font-size:7.300px;color:#666">试用或了解更多服务内容</div>
  <svg id="qr" style="left:21px;top:272.300px" width="33" height="33" viewBox="0 0 29 29"><rect width="29" height="29" fill="#fff"/><path fill="#111" d="M0 0h7v1h-7zM8 0h5v1h-5zM14 0h2v1h-2zM19 0h1v1h-1zM22 0h7v1h-7zM0 1h1v1h-1zM6 1h1v1h-1zM8 1h2v1h-2zM11 1h2v1h-2zM15 1h1v1h-1zM20 1h1v1h-1zM22 1h1v1h-1zM28 1h1v1h-1zM0 2h1v1h-1zM2 2h3v1h-3zM6 2h1v1h-1zM10 2h1v1h-1zM12 2h1v1h-1zM17 2h2v1h-2zM20 2h1v1h-1zM22 2h1v1h-1zM24 2h3v1h-3zM28 2h1v1h-1zM0 3h1v1h-1zM2 3h3v1h-3zM6 3h1v1h-1zM8 3h2v1h-2zM12 3h5v1h-5zM18 3h3v1h-3zM22 3h1v1h-1zM24 3h3v1h-3zM28 3h1v1h-1zM0 4h1v1h-1zM2 4h3v1h-3zM6 4h1v1h-1zM8 4h11v1h-11zM22 4h1v1h-1zM24 4h3v1h-3zM28 4h1v1h-1zM0 5h1v1h-1zM6 5h1v1h-1zM10 5h1v1h-1zM12 5h1v1h-1zM17 5h3v1h-3zM22 5h1v1h-1zM28 5h1v1h-1zM0 6h7v1h-7zM8 6h1v1h-1zM10 6h1v1h-1zM12 6h1v1h-1zM14 6h1v1h-1zM16 6h1v1h-1zM18 6h1v1h-1zM20 6h1v1h-1zM22 6h7v1h-7zM8 7h2v1h-2zM12 7h3v1h-3zM17 7h1v1h-1zM0 8h1v1h-1zM3 8h4v1h-4zM8 8h3v1h-3zM12 8h2v1h-2zM16 8h1v1h-1zM21 8h4v1h-4zM26 8h2v1h-2zM1 9h1v1h-1zM5 9h1v1h-1zM7 9h2v1h-2zM14 9h1v1h-1zM19 9h1v1h-1zM21 9h1v1h-1zM26 9h1v1h-1zM1 10h6v1h-6zM10 10h1v1h-1zM13 10h1v1h-1zM16 10h1v1h-1zM18 10h2v1h-2zM22 10h2v1h-2zM25 10h3v1h-3zM0 11h1v1h-1zM2 11h3v1h-3zM7 11h1v1h-1zM11 11h3v1h-3zM15 11h3v1h-3zM20 11h2v1h-2zM25 11h2v1h-2zM28 11h1v1h-1zM0 12h1v1h-1zM4 12h1v1h-1zM6 12h1v1h-1zM8 12h2v1h-2zM12 12h2v1h-2zM15 12h7v1h-7zM23 12h1v1h-1zM25 12h4v1h-4zM0 13h1v1h-1zM3 13h2v1h-2zM8 13h2v1h-2zM11 13h1v1h-1zM15 13h1v1h-1zM19 13h5v1h-5zM25 13h3v1h-3zM2 14h7v1h-7zM12 14h1v1h-1zM14 14h5v1h-5zM20 14h1v1h-1zM22 14h7v1h-7zM0 15h1v1h-1zM7 15h2v1h-2zM10 15h1v1h-1zM13 15h1v1h-1zM19 15h1v1h-1zM0 16h5v1h-5zM6 16h1v1h-1zM10 16h2v1h-2zM17 16h1v1h-1zM19 16h3v1h-3zM23 16h1v1h-1zM26 16h3v1h-3zM4 17h2v1h-2zM8 17h1v1h-1zM10 17h3v1h-3zM16 17h1v1h-1zM18 17h3v1h-3zM22 17h1v1h-1zM25 17h2v1h-2zM0 18h3v1h-3zM4 18h1v1h-1zM6 18h1v1h-1zM9 18h1v1h-1zM14 18h1v1h-1zM16 18h9v1h-9zM26 18h1v1h-1zM0 19h1v1h-1zM4 19h2v1h-2zM9 19h5v1h-5zM15 19h1v1h-1zM17 19h2v1h-2zM20 19h2v1h-2zM1 20h1v1h-1zM3 20h1v1h-1zM6 20h2v1h-2zM9 20h4v1h-4zM15 20h1v1h-1zM17 20h1v1h-1zM19 20h7v1h-7zM28 20h1v1h-1zM10 21h2v1h-2zM13 21h4v1h-4zM18 21h1v1h-1zM20 21h1v1h-1zM24 21h3v1h-3zM0 22h7v1h-7zM8 22h1v1h-1zM13 22h3v1h-3zM20 22h1v1h-1zM22 22h1v1h-1zM24 22h1v1h-1zM26 22h1v1h-1zM0 23h1v1h-1zM6 23h1v1h-1zM9 23h2v1h-2zM12 23h3v1h-3zM18 23h3v1h-3zM24 23h2v1h-2zM27 23h2v1h-2zM0 24h1v1h-1zM2 24h3v1h-3zM6 24h1v1h-1zM11 24h1v1h-1zM13 24h1v1h-1zM15 24h2v1h-2zM18 24h1v1h-1zM20 24h5v1h-5zM26 24h3v1h-3zM0 25h1v1h-1zM2 25h3v1h-3zM6 25h1v1h-1zM10 25h2v1h-2zM14 25h1v1h-1zM16 25h7v1h-7zM24 25h1v1h-1zM26 25h2v1h-2zM0 26h1v1h-1zM2 26h3v1h-3zM6 26h1v1h-1zM9 26h2v1h-2zM13 26h3v1h-3zM17 26h1v1h-1zM20 26h2v1h-2zM24 26h1v1h-1zM26 26h3v1h-3zM0 27h1v1h-1zM6 27h1v1h-1zM9 27h4v1h-4zM14 27h1v1h-1zM20 27h3v1h-3zM24 27h2v1h-2zM27 27h2v1h-2zM0 28h7v1h-7zM8 28h2v1h-2zM11 28h3v1h-3zM19 28h1v1h-1zM21 28h1v1h-1zM23 28h1v1h-1zM25 28h4v1h-4z"/></svg>
</div>
</div>
</body>
</html>
